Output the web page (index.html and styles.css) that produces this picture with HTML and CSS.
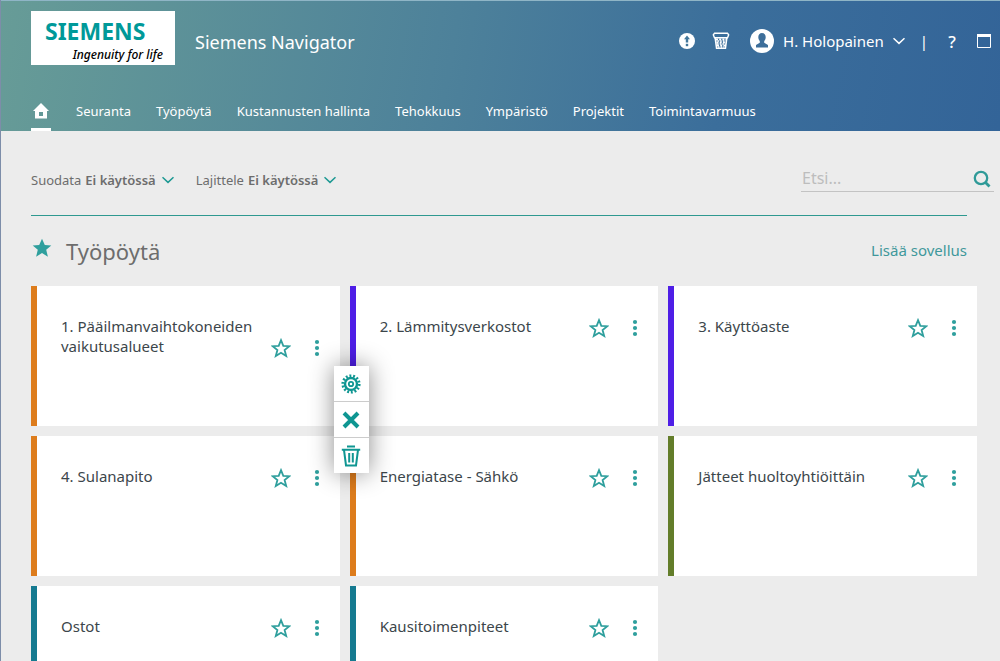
FILE: index.html
```html
<!DOCTYPE html>
<html lang="fi">
<head>
<meta charset="utf-8">
<title>Siemens Navigator</title>
<link rel="stylesheet" href="styles.css">
</head>
<body>
<svg class="defs" aria-hidden="true">
  <symbol id="star" viewBox="0 0 20 20"><path d="M10 2.200 12.300 7.900 18.300 8.200 13.600 12 15.200 18 10 14.700 4.800 18 6.400 12 1.700 8.200 7.700 7.900Z" fill="none" stroke="currentColor" stroke-width="1.800"/></symbol>
  <symbol id="dots" viewBox="0 0 20 20"><circle cx="10" cy="4" r="2.1"/><circle cx="10" cy="10" r="2.1"/><circle cx="10" cy="16" r="2.1"/></symbol>
  <symbol id="chevron" viewBox="0 0 12 8"><path d="M.5 1.2 6 6.4 11.5 1.2" fill="none" stroke="currentColor" stroke-width="1.5"/></symbol>
</svg>
<div class="page">
  <header class="header">
    <div class="brand-row">
      <div class="logo">
        <span class="logo-name">SIEMENS</span>
        <span class="logo-claim">Ingenuity for life</span>
      </div>
      <h1 class="product">Siemens Navigator</h1>
      <div class="tools">
        <button class="tool" aria-label="Ilmoitukset"><svg width="16" height="16" viewBox="0 0 16 16"><circle cx="8" cy="8" r="8" fill="#fff"/><path d="M8 2.6 11 6.3H9.2V9.4H6.8V6.3H5Z" fill="#42779b"/><rect x="6.8" y="10.8" width="2.4" height="2.4" fill="#42779b"/></svg></button>
        <button class="tool" aria-label="Kori"><svg width="18" height="18" viewBox="0 0 18 18" fill="none" stroke="#fff"><path d="M2.500 1.300h13l1.200 1.500-1.200 2.900h-13L1.300 2.800Z" stroke-width="1.400"/><path d="M3.200 6 4.600 16.200h8.800L14.800 6" stroke-width="1.600"/><path d="M4 7.500h10M4.500 10.500h9M5 13.500h8" stroke-width="1.800" stroke-dasharray="2 1.200"/><path d="M5.500 9h8M5 12h8M6 15h6" stroke-width="1.500" stroke-dasharray="1.500 1.200"/></svg></button>
        <button class="user"><svg width="24" height="24" viewBox="0 0 24 24"><circle cx="12" cy="12" r="12" fill="#fff"/><path d="M12 4C9.700 4 8.300 5.700 8.300 8c0 1.800.500 3.100 1.500 4v1.700L6 16v2.600h12V16l-3.800-2.300V12c1-.900 1.500-2.200 1.500-4 0-2.300-1.400-4-3.700-4Z" fill="#3d6e9a"/></svg><span>H. Holopainen</span><svg width="12" height="8"><use href="#chevron"/></svg></button>
        <span class="divider">|</span>
        <button class="tool help" aria-label="Ohje">?</button>
        <button class="tool" aria-label="Koko näyttö"><svg width="14" height="14" viewBox="0 0 14 14"><path d="M.5.500h13v13H.500Z" fill="none" stroke="#fff"/><path d="M0 0h14v3H0Z" fill="#fff"/></svg></button>
      </div>
    </div>
    <nav class="nav">
      <a class="home" href="#" aria-label="Etusivu"><svg width="16" height="16" viewBox="0 0 16 16" fill="#fff"><path fill-rule="evenodd" d="M8 0 16 8h-2v7.500H2V8H0Zm-2 9v4h4V9Z"/></svg></a>
      <a href="#">Seuranta</a>
      <a href="#">Työpöytä</a>
      <a href="#">Kustannusten hallinta</a>
      <a href="#">Tehokkuus</a>
      <a href="#">Ympäristö</a>
      <a href="#">Projektit</a>
      <a href="#">Toimintavarmuus</a>
    </nav>
  </header>
  <main class="main">
    <div class="filters">
      <button class="filter">Suodata <b>Ei käytössä</b><svg width="12" height="8"><use href="#chevron"/></svg></button>
      <button class="filter">Lajittele <b>Ei käytössä</b><svg width="12" height="8"><use href="#chevron"/></svg></button>
      <form class="search">
        <input type="text" placeholder="Etsi..." aria-label="Etsi">
        <button type="button" aria-label="Hae"><svg width="18" height="18" viewBox="0 0 18 18" fill="none" stroke="currentColor"><circle cx="8" cy="8" r="6.200" stroke-width="2.300"/><path d="M12.500 12.500 16.500 16.500" stroke-width="2.800"/></svg></button>
      </form>
    </div>
    <section class="section">
      <div class="section-head">
        <svg class="section-star" width="20" height="20" viewBox="0 0 20 20"><path d="M10 .8 12.800 7 19.300 7.400 14.200 11.700 15.900 18.800 10 15 4.100 18.800 5.800 11.700.7 7.400 7.200 7Z" fill="currentColor"/></svg>
        <h2>Työpöytä</h2>
        <a href="#">Lisää sovellus</a>
      </div>
      <div class="cards">
        <article class="card orange">
          <h3>1. Pääilmanvaihtokoneiden vaikutusalueet</h3>
          <button aria-label="Suosikki"><svg width="20" height="20"><use href="#star"/></svg></button>
          <button aria-label="Valikko"><svg width="20" height="20"><use href="#dots"/></svg></button>
          <div class="menu">
            <button aria-label="Asetukset"><svg width="20" height="20" viewBox="0 0 20 20" fill="none" stroke="currentColor"><circle cx="10" cy="10" r="8.200" stroke-width="2.800" stroke-dasharray="1.900 1.780"/><circle cx="10" cy="10" r="6" stroke-width="2.400"/><circle cx="10" cy="10" r="2.200" stroke-width="1.800"/></svg></button>
            <button aria-label="Sulje"><svg width="20" height="20" viewBox="0 0 20 20"><path d="M3 3 17 17M17 3 3 17" stroke="currentColor" stroke-width="4"/></svg></button>
            <button aria-label="Poista"><svg width="20" height="22" viewBox="0 0 20 22" fill="none" stroke="currentColor" stroke-width="2"><path d="M6 1.500h8M.8 4.800h18.400M3 5 5 20.500h10L17 5"/><path d="M8.200 8v9.500M11.800 8v9.500"/></svg></button>
          </div>
        </article>
        <article class="card violet">
          <h3>2. Lämmitysverkostot</h3>
          <button aria-label="Suosikki"><svg width="20" height="20"><use href="#star"/></svg></button>
          <button aria-label="Valikko"><svg width="20" height="20"><use href="#dots"/></svg></button>
        </article>
        <article class="card violet">
          <h3>3. Käyttöaste</h3>
          <button aria-label="Suosikki"><svg width="20" height="20"><use href="#star"/></svg></button>
          <button aria-label="Valikko"><svg width="20" height="20"><use href="#dots"/></svg></button>
        </article>
        <article class="card orange">
          <h3>4. Sulanapito</h3>
          <button aria-label="Suosikki"><svg width="20" height="20"><use href="#star"/></svg></button>
          <button aria-label="Valikko"><svg width="20" height="20"><use href="#dots"/></svg></button>
        </article>
        <article class="card orange">
          <h3>Energiatase - Sähkö</h3>
          <button aria-label="Suosikki"><svg width="20" height="20"><use href="#star"/></svg></button>
          <button aria-label="Valikko"><svg width="20" height="20"><use href="#dots"/></svg></button>
        </article>
        <article class="card green">
          <h3>Jätteet huoltoyhtiöittäin</h3>
          <button aria-label="Suosikki"><svg width="20" height="20"><use href="#star"/></svg></button>
          <button aria-label="Valikko"><svg width="20" height="20"><use href="#dots"/></svg></button>
        </article>
        <article class="card blue">
          <h3>Ostot</h3>
          <button aria-label="Suosikki"><svg width="20" height="20"><use href="#star"/></svg></button>
          <button aria-label="Valikko"><svg width="20" height="20"><use href="#dots"/></svg></button>
        </article>
        <article class="card blue">
          <h3>Kausitoimenpiteet</h3>
          <button aria-label="Suosikki"><svg width="20" height="20"><use href="#star"/></svg></button>
          <button aria-label="Valikko"><svg width="20" height="20"><use href="#dots"/></svg></button>
        </article>
      </div>
    </section>
  </main>
</div>
</body>
</html>
```
FILE: styles.css
```css
* { box-sizing: border-box; }
html { scrollbar-width: none; }
body { margin: 0; background: #ececec; color: #3c464b; font-family: "Noto Sans", "Open Sans", sans-serif; font-size: 13px; }
button, input { font: inherit; color: inherit; background: none; border: 0; padding: 0; margin: 0; }
button { cursor: pointer; display: flex; align-items: center; justify-content: center; }
a { color: inherit; text-decoration: none; }
h1, h2, h3 { margin: 0; font-weight: 400; }
svg { display: block; flex: none; }
.defs { position: absolute; width: 0; height: 0; }
.page { min-height: 100vh; border-left: 1px solid #7d8da9; }

.header { height: 131px; padding-left: 30px; display: flex; flex-direction: column; justify-content: space-between; color: #fff; border-top: 1px solid #8fb5c6; background: linear-gradient(100deg, #679c97 0%, #4d819a 45%, #3b6e9b 72%, #336498 100%); }
.brand-row { display: flex; align-items: center; padding: 10px 9px 0 0; }
.logo { width: 144px; height: 54px; padding: 8px 12px 0 14px; background: #fff; display: flex; flex-direction: column; justify-content: space-between; }
.logo-name { color: #099; font: 700 23px/24px "Noto Sans", sans-serif; }
.logo-claim { color: #000; font: italic 500 12px/20px "Noto Sans", sans-serif; text-align: right; white-space: nowrap; }
.product { margin-left: 20px; font-size: 18px; line-height: 28px; padding-top: 8px; }
.tools { margin-left: auto; display: flex; align-items: center; padding-top: 6px; font-size: 15px; }
.tool { min-width: 16px; margin-right: 17px; }
.tool:last-child { margin-right: 0; min-width: 14px; }
.user { gap: 9px; margin: 0 15px 0 3px; }
.divider { margin-right: 16px; }
.help { font-size: 17px; font-weight: 500; }

.nav { display: flex; gap: 25px; height: 39px; line-height: 39px; }
.home { width: 20px; border-bottom: 3px solid #fff; display: flex; align-items: center; justify-content: center; padding-top: 2px; }

.filters { display: flex; align-items: center; gap: 22px; height: 84px; padding: 0 6px 0 30px; color: #6d6d6d; }
.filter { gap: 4px; padding-top: 14px; }
.filter b { font-weight: 600; }
.filter svg { margin-left: 2px; color: #1d9993; }
.search { margin-left: auto; width: 193px; height: 28px; border-bottom: 1px solid #c3c3c3; display: flex; align-items: center; margin-top: 10px; }
.search input { flex: 1; min-width: 0; height: 26px; padding-left: 1px; font-size: 16px; outline: 0; }
.search input::placeholder { color: #bdbdbd; opacity: 1; }
.search button { width: 24px; padding-top: 2px; color: #2f9a98; }

.section { padding: 0 23px 0 30px; }
.section-head { display: flex; align-items: center; height: 71px; margin-right: 10px; border-top: 1px solid #2e9990; color: #6d6d6d; }
.section-head h2 { flex: 1; font-size: 22px; line-height: 32px; margin-left: 14px; }
.section-head a { font-size: 15px; padding-bottom: 2px; color: #3f989b; }
.section-star { color: #2f9f9d; margin-bottom: 6px; margin-left: 1px; }

.cards { display: grid; grid-template-columns: repeat(3, 1fr); gap: 10px; }
.card { position: relative; height: 140px; display: grid; grid-template-columns: 1fr 36px 36px; align-content: start; align-items: end; padding: 30px 5px 0 24px; background: #fff; border-left: 6px solid; }
.card h3 { font-size: 15px; line-height: 20px; padding-bottom: 2px; color: #3c464b; }
.card button { color: #2f9f9d; fill: currentColor; }
.orange { border-color: #dd7c1c; }
.violet { border-color: #4e1ee6; }
.green { border-color: #637d2a; }
.blue { border-color: #157a90; }

.menu { position: absolute; z-index: 1; left: 297px; top: 80px; width: 35px; background: #fff; box-shadow: 0 0 24px rgba(0, 0, 0, .45); }
.menu button { width: 100%; height: 35px; padding-right: 1px; color: #0f9692; }
.menu button + button { height: 36px; border-top: 1px solid #ccc; }
.menu button svg { fill: none; }
```
